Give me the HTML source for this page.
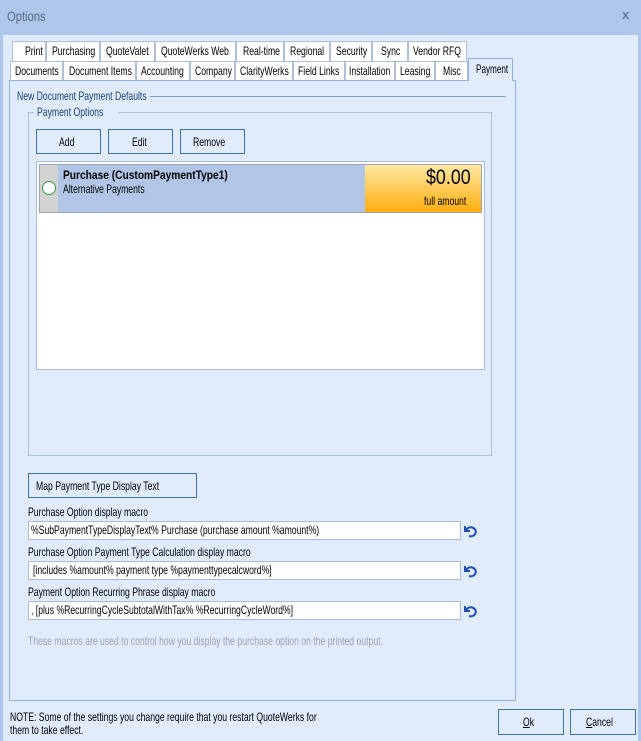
<!DOCTYPE html>
<html><head><meta charset="utf-8"><style>
*{margin:0;padding:0;box-sizing:border-box}
body{width:641px;height:741px;background:#adc7ec;font-family:"Liberation Sans",sans-serif;font-size:12px;color:#000;position:relative;overflow:hidden}
.a{position:absolute}
.t{position:absolute;white-space:nowrap;transform:scaleX(.72);transform-origin:0 0;line-height:14px}
.win{left:3px;top:35px;width:635px;height:706px;background:#e0ecfc}
.tab{position:absolute;height:20px;background:#fff;border:1px solid #aebfd8;border-bottom:none}
.panel{left:9px;top:80px;width:507px;height:621px;border:1px solid #8fb1db;background:#e0ecfc}
.btn{position:absolute;border:1px solid #3c6ea8;background:#e0ecfc}
.inp{position:absolute;background:#fff;border:1px solid #a9bbd6;height:19px}
.undo{position:absolute;width:14px;height:14px}
</style></head><body>
<div class="t" style="left:7px;top:9px;color:#5a6a80;font-size:14px;transform:scaleX(.8)">Options</div>
<div class="t" style="left:622px;top:8px;color:#6b7d95;font-size:13px;font-weight:bold;transform:none">x</div>
<div class="a win"></div>
<div class="tab" style="left:12px;top:41px;width:34px"></div><div class="t" style="left:25px;top:44px">Print</div>
<div class="tab" style="left:46px;top:41px;width:54px"></div><div class="t" style="left:52px;top:44px">Purchasing</div>
<div class="tab" style="left:100px;top:41px;width:55px"></div><div class="t" style="left:106px;top:44px">QuoteValet</div>
<div class="tab" style="left:155px;top:41px;width:81px"></div><div class="t" style="left:161px;top:44px">QuoteWerks Web</div>
<div class="tab" style="left:236px;top:41px;width:48px"></div><div class="t" style="left:243px;top:44px">Real-time</div>
<div class="tab" style="left:284px;top:41px;width:46px"></div><div class="t" style="left:290px;top:44px">Regional</div>
<div class="tab" style="left:330px;top:41px;width:42px"></div><div class="t" style="left:336px;top:44px">Security</div>
<div class="tab" style="left:372px;top:41px;width:36px"></div><div class="t" style="left:381px;top:44px">Sync</div>
<div class="tab" style="left:408px;top:41px;width:59px"></div><div class="t" style="left:413px;top:44px">Vendor RFQ</div>
<div class="tab" style="left:10px;top:61px;width:53px"></div><div class="t" style="left:15px;top:64px">Documents</div>
<div class="tab" style="left:63px;top:61px;width:73px"></div><div class="t" style="left:69px;top:64px">Document Items</div>
<div class="tab" style="left:136px;top:61px;width:54px"></div><div class="t" style="left:141px;top:64px">Accounting</div>
<div class="tab" style="left:190px;top:61px;width:45px"></div><div class="t" style="left:195px;top:64px">Company</div>
<div class="tab" style="left:235px;top:61px;width:58px"></div><div class="t" style="left:240px;top:64px">ClarityWerks</div>
<div class="tab" style="left:293px;top:61px;width:52px"></div><div class="t" style="left:298px;top:64px">Field Links</div>
<div class="tab" style="left:345px;top:61px;width:50px"></div><div class="t" style="left:349px;top:64px">Installation</div>
<div class="tab" style="left:395px;top:61px;width:40px"></div><div class="t" style="left:400px;top:64px">Leasing</div>
<div class="tab" style="left:435px;top:61px;width:33px"></div><div class="t" style="left:443px;top:64px">Misc</div>
<div class="a panel"></div>
<div class="tab" style="left:468px;top:58px;width:45px;height:23px;background:#e0ecfc;border-color:#8fb1db"></div><div class="t" style="left:476px;top:62px;transform:scaleX(.68)">Payment</div>
<div class="t" style="left:17px;top:89px;color:#1a3f78">New Document Payment Defaults</div>
<div class="a" style="left:150px;top:96px;width:356px;height:1px;background:#7f9cc4"></div>
<div class="a" style="left:28px;top:112px;width:464px;height:344px;border:1px solid #aebfd8"></div>
<div class="a" style="left:34px;top:108px;width:84px;height:8px;background:#e0ecfc"></div>
<div class="t" style="left:37px;top:105px;color:#1a3f78">Payment Options</div>
<div class="btn" style="left:36px;top:129px;width:65px;height:25px"></div><div class="t" style="left:59px;top:135px">Add</div>
<div class="btn" style="left:108px;top:129px;width:65px;height:25px"></div><div class="t" style="left:132px;top:135px">Edit</div>
<div class="btn" style="left:180px;top:129px;width:65px;height:25px"></div><div class="t" style="left:193px;top:135px">Remove</div>
<div class="a" style="left:36px;top:161px;width:449px;height:209px;background:#fff;border:1px solid #a9bbd6"></div>
<div class="a" style="left:39px;top:164px;width:443px;height:49px;background:#b1c5e7;border:1px solid #9aa7b8"></div>
<div class="a" style="left:40px;top:165px;width:18px;height:47px;background:#d2d2d2"></div>
<div class="a" style="left:42px;top:181px;width:14px;height:14px;border-radius:50%;background:#fff;border:1.5px solid #3a9a3a"></div>
<div class="a" style="left:365px;top:165px;width:116px;height:47px;background:linear-gradient(#ffe8a0,#ffae10)"></div>
<div class="t" style="left:63px;top:168px;font-weight:bold;transform:scaleX(.85)">Purchase (CustomPaymentType1)</div>
<div class="t" style="left:63px;top:182px">Alternative Payments</div>
<div class="t" style="left:426px;top:166px;font-size:21px;line-height:24px;transform:scaleX(.85)">$0.00</div>
<div class="t" style="left:424px;top:194px">full amount</div>
<div class="btn" style="left:28px;top:473px;width:169px;height:25px"></div><div class="t" style="left:36px;top:479px">Map Payment Type Display Text</div>
<div class="t" style="left:28px;top:505px">Purchase Option display macro</div>
<div class="inp" style="left:28px;top:521px;width:433px"></div><div class="t" style="left:31px;top:523px">%SubPaymentTypeDisplayText% Purchase (purchase amount %amount%)</div>
<div class="t" style="left:28px;top:545px">Purchase Option Payment Type Calculation display macro</div>
<div class="inp" style="left:28px;top:561px;width:433px"></div><div class="t" style="left:33px;top:563px">[includes %amount% payment type %paymenttypecalcword%]</div>
<div class="t" style="left:28px;top:585px">Payment Option Recurring Phrase display macro</div>
<div class="inp" style="left:28px;top:601px;width:433px"></div><div class="t" style="left:31px;top:603px">, [plus %RecurringCycleSubtotalWithTax% %RecurringCycleWord%]</div>
<svg class="undo" style="left:463px;top:524px" viewBox="0 0 14 14"><path d="M2 2v5h5M3 6.5A5 4.5 0 1 1 6 12" fill="none" stroke="#1f4fb0" stroke-width="2"/></svg>
<svg class="undo" style="left:463px;top:564px" viewBox="0 0 14 14"><path d="M2 2v5h5M3 6.5A5 4.5 0 1 1 6 12" fill="none" stroke="#1f4fb0" stroke-width="2"/></svg>
<svg class="undo" style="left:463px;top:604px" viewBox="0 0 14 14"><path d="M2 2v5h5M3 6.5A5 4.5 0 1 1 6 12" fill="none" stroke="#1f4fb0" stroke-width="2"/></svg>
<div class="t" style="left:28px;top:634px;color:#9aa3ae">These macros are used to control how you display the purchase option on the printed output.</div>
<div class="t" style="left:10px;top:710px">NOTE: Some of the settings you change require that you restart QuoteWerks for</div>
<div class="t" style="left:10px;top:723px">them to take effect.</div>
<div class="btn" style="left:498px;top:709px;width:66px;height:26px"></div><div class="t" style="left:523px;top:715px"><u>O</u>k</div>
<div class="btn" style="left:570px;top:709px;width:66px;height:26px"></div><div class="t" style="left:586px;top:715px"><u>C</u>ancel</div>
</body></html>
